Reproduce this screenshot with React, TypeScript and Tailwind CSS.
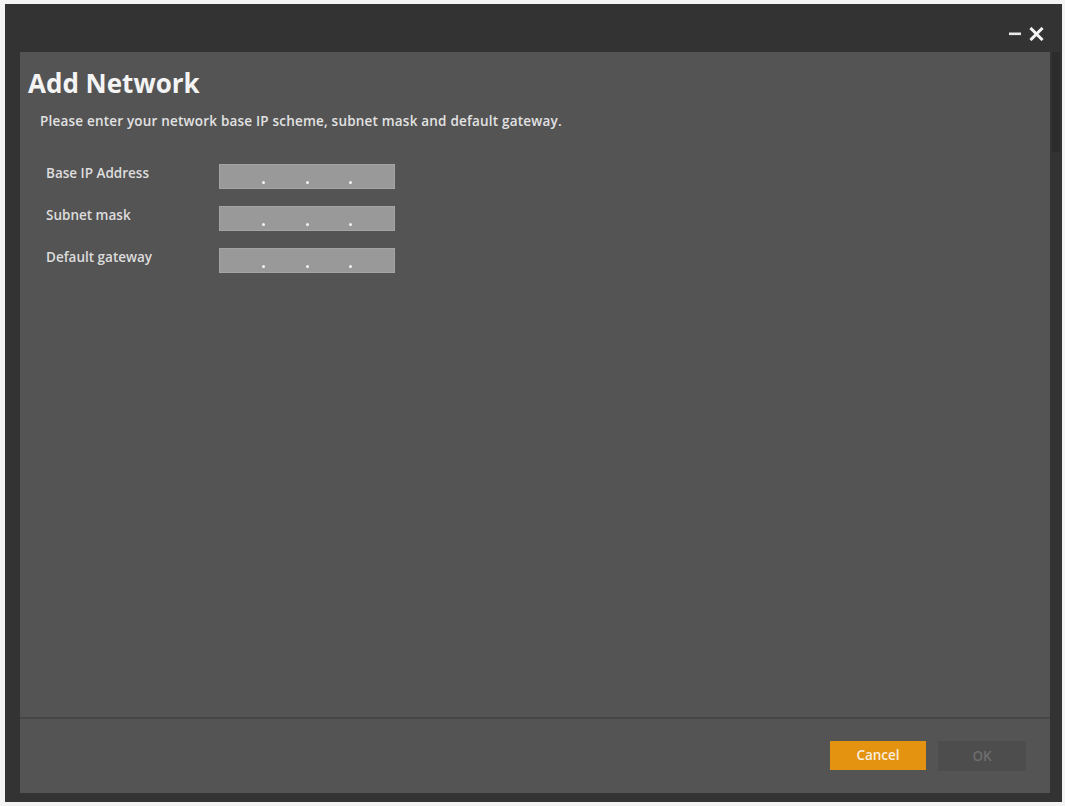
import React from "react";

function IpField() {
  return (
    <div className="relative w-[176px] h-[25px] bg-[#999999] border border-[#a4a4a4]">
      <span className="absolute left-[42px] top-[16px] w-[3px] h-[3px] rounded-full bg-[#f2f2f2]" />
      <span className="absolute left-[86px] top-[16px] w-[3px] h-[3px] rounded-full bg-[#f2f2f2]" />
      <span className="absolute left-[129px] top-[16px] w-[3px] h-[3px] rounded-full bg-[#f2f2f2]" />
    </div>
  );
}

export default function App() {
  const rows = ["Base IP Address", "Subnet mask", "Default gateway"];
  return (
    <div
      className="w-[1065px] h-[806px] bg-[#f4f4f4] pl-[5px] pt-[4px] pr-[3px] pb-[4px]"
      style={{ fontFamily: '"Open Sans", "Noto Sans", sans-serif' }}
    >
      <div className="w-full h-full bg-[#333333] flex flex-col">
        {/* title bar */}
        <div className="h-[48px] flex items-start justify-end pr-[18px] pt-[23px] gap-[8px]">
          <svg width="12" height="14" viewBox="0 0 12 14">
            <rect x="0" y="5.5" width="12" height="2.6" fill="#e8e8e8" />
          </svg>
          <svg width="15" height="14" viewBox="0 0 15 14">
            <path d="M2.5 2 L12.5 12 M12.5 2 L2.5 12" stroke="#f4f4f4" strokeWidth="3" strokeLinecap="square" />
          </svg>
        </div>
        <div className="flex flex-1 pl-[15px] pb-[9px]">
          <div className="flex-1 bg-[#545454] flex flex-col">
            <div className="flex-1 pl-[8px] pt-[15px]">
              <h1 className="text-[26px] font-bold text-[#f4f4f4] leading-[32px]">Add Network</h1>
              <p className="mt-[13px] ml-[12px] text-[13.5px] tracking-[0.2px] font-semibold text-[#e2e2e2] leading-[18px]">
                Please enter your network base IP scheme, subnet mask and default gateway.
              </p>
              <div className="mt-[34px] ml-[18px] flex flex-col gap-[17px]">
                {rows.map((r) => (
                  <div key={r} className="flex items-start">
                    <div className="w-[173px] text-[13.5px] font-semibold text-[#dddddd] leading-[18px]">{r}</div>
                    <IpField />
                  </div>
                ))}
              </div>
            </div>
            <div className="h-[2px] bg-[#464646]" />
            <div className="h-[74px] flex items-start justify-end pt-[22px] pr-[24px] gap-[12px]">
              <button className="w-[96px] h-[29px] bg-[#e39310] text-[#fbeede] text-[13.5px] font-semibold">Cancel</button>
              <button className="w-[88px] h-[30px] bg-[#4d4d4d] text-[#6e6e6e] text-[13.5px] font-semibold">OK</button>
            </div>
          </div>
          <div className="w-[12px] flex flex-col">
            <div className="h-[100px] bg-[#2c2c2c] ml-[2px] w-[8px]" />
          </div>
        </div>
      </div>
    </div>
  );
}
